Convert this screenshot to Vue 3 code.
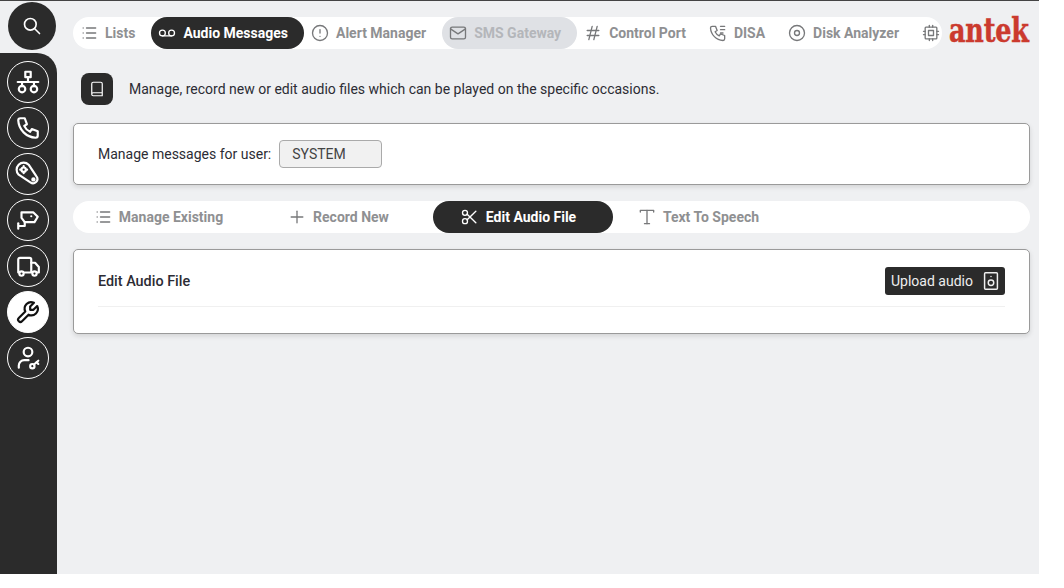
<template>
  <div class="page">
    <aside class="side">
      <button class="search-btn"><Icon :paths="icons.search" :size="20" /></button>
      <nav class="side-nav">
        <a v-for="item in sideItems" :key="item.id" class="side-item" :class="{ active: item.id === 'tools' }">
          <svg :class="{ flip: item.flip }" width="26" height="26" viewBox="0 0 24 24" fill="none" stroke="currentColor" stroke-width="2" stroke-linecap="round" stroke-linejoin="round">
            <path v-for="d in item.paths" :key="d" :d="d" />
          </svg>
        </a>
      </nav>
    </aside>

    <main class="main">
      <header class="top">
        <div class="tabs">
          <a v-for="t in topTabs" :key="t.label" class="tab" :class="{ active: t.active, disabled: t.disabled }">
            <Icon :paths="t.icon" :size="20" />
            <span v-if="t.label">{{ t.label }}</span>
          </a>
        </div>
        <div class="logo">antek</div>
      </header>

      <div class="intro">
        <span class="intro-icon"><Icon :paths="icons.book" :size="18" /></span>
        <p>Manage, record new or edit audio files which can be played on the specific occasions.</p>
      </div>

      <section class="card user-card">
        <label>Manage messages for user:</label>
        <div class="fake-input">SYSTEM</div>
      </section>

      <div class="subtabs">
        <a v-for="t in subTabs" :key="t.label" class="subtab" :class="{ active: t.active }">
          <Icon :paths="t.icon" :size="20" />
          <span>{{ t.label }}</span>
        </a>
      </div>

      <section class="card edit-card">
        <div class="edit-head">
          <h4>Edit Audio File</h4>
          <button class="upload">Upload audio <Icon :paths="icons.speaker" :size="22" /></button>
        </div>
      </section>
    </main>
  </div>
</template>

<script setup>
import { h } from 'vue'

const Icon = (props) => h('svg', {
  width: props.size, height: props.size, viewBox: '0 0 24 24', fill: 'none',
  stroke: 'currentColor', 'stroke-width': 2, 'stroke-linecap': 'round', 'stroke-linejoin': 'round',
}, props.paths.map(d => h('path', { d })))
Icon.props = ['paths', 'size']

const ring = 'M3 12a9 9 0 1 0 18 0a9 9 0 1 0 -18 0'

const icons = {
  search: ['M3 10a7 7 0 1 0 14 0a7 7 0 1 0 -14 0', 'M21 21l-6 -6'],
  list: ['M9 6h11', 'M9 12h11', 'M9 18h11', 'M5 6v.01', 'M5 12v.01', 'M5 18v.01'],
  voicemail: ['M3 12a3.5 3.5 0 1 0 7 0a3.5 3.5 0 1 0 -7 0', 'M14 12a3.5 3.5 0 1 0 7 0a3.5 3.5 0 1 0 -7 0', 'M6.5 15.5h11'],
  alert: [ring, 'M12 8v4', 'M12 16h.01'],
  mail: ['M3 7a2 2 0 0 1 2 -2h14a2 2 0 0 1 2 2v10a2 2 0 0 1 -2 2h-14a2 2 0 0 1 -2 -2z', 'M3 7l9 6l9 -6'],
  hash: ['M5 9h14', 'M5 15h14', 'M11 4l-4 16', 'M17 4l-4 16'],
  phoneLines: ['M5 4h4l2 5l-2.5 1.5a11 11 0 0 0 5 5l1.5 -2.5l5 2v4a2 2 0 0 1 -2 2a16 16 0 0 1 -15 -15a2 2 0 0 1 2 -2', 'M15 4h5', 'M15 8h5', 'M15 12h3'],
  disc: [ring, 'M9 12a3 3 0 1 0 6 0a3 3 0 1 0 -6 0'],
  cpu: ['M5 6a1 1 0 0 1 1 -1h12a1 1 0 0 1 1 1v12a1 1 0 0 1 -1 1h-12a1 1 0 0 1 -1 -1z', 'M9 9h6v6h-6z', 'M3 10h2', 'M3 14h2', 'M10 3v2', 'M14 3v2', 'M21 10h-2', 'M21 14h-2', 'M14 21v-2', 'M10 21v-2'],
  book: ['M5 19v-14a2 2 0 0 1 2 -2h10a2 2 0 0 1 2 2v16h-12a2 2 0 0 1 -2 -2a2 2 0 0 1 2 -2h12'],
  plus: ['M12 5v14', 'M5 12h14'],
  scissors: ['M3 7a3 3 0 1 0 6 0a3 3 0 1 0 -6 0', 'M3 17a3 3 0 1 0 6 0a3 3 0 1 0 -6 0', 'M8.6 8.6l10.4 10.4', 'M8.6 15.4l10.4 -10.4'],
  text: ['M4 6v-2h16v2', 'M12 4v16', 'M9 20h6'],
  speaker: ['M6 3h12a1 1 0 0 1 1 1v16a1 1 0 0 1 -1 1h-12a1 1 0 0 1 -1 -1v-16a1 1 0 0 1 1 -1z', 'M9 14a3 3 0 1 0 6 0a3 3 0 1 0 -6 0', 'M12 7v.01'],
}

const sideItems = [
  { id: 'network', paths: ['M9.5 2.5h5v5h-5z', 'M2.5 12h19', 'M12 7.5v4.5', 'M6.5 12v4', 'M17.5 12v4', 'M3.5 18.5a3 3 0 1 0 6 0a3 3 0 1 0 -6 0', 'M14.5 18.5a3 3 0 1 0 6 0a3 3 0 1 0 -6 0'] },
  { id: 'phone', paths: ['M5 3h4l2 5.5l-2.5 1.5a11 11 0 0 0 5.5 5.5l1.5 -2.5l5.5 2v4a2 2 0 0 1 -2 2a17 17 0 0 1 -16 -16a2 2 0 0 1 2 -2'] },
  { id: 'belt', paths: ['M3.4 12.6A6.5 6.5 0 0 1 12.6 3.4L19.8 14.2A4 4 0 0 1 14.2 19.8Z', 'M6 8a2 2 0 1 0 4 0a2 2 0 1 0 -4 0', 'M8 4.8v.6', 'M8 10.6v.6', 'M4.8 8h.6', 'M10.6 8h.6', 'M16 17a1 1 0 1 0 2 0a1 1 0 1 0 -2 0'] },
  { id: 'cctv', paths: ['M6 5h11l4 4l-3 5h-9l-3 -4z', 'M15 8.5h.01', 'M9 14v3.5h-5.5', 'M3 15v5'] },
  { id: 'truck', paths: ['M4 18h-1v-12a1.5 1.5 0 0 1 1.5 -1.5h9a1.5 1.5 0 0 1 1.5 1.5v12h-6', 'M15 9h3.5l3.5 4v5h-1.5', 'M4 19a2 2 0 1 0 4 0a2 2 0 1 0 -4 0', 'M16 19a2 2 0 1 0 4 0a2 2 0 1 0 -4 0'] },
  { id: 'tools', flip: true, paths: ['M7 10h3v-3l-3.5 -3.5a6 6 0 0 1 8 8l6 6a2 2 0 0 1 -3 3l-6 -6a6 6 0 0 1 -8 -8l3.5 3.5'] },
  { id: 'user', paths: ['M8 6.5a4 4 0 1 0 8 0a4 4 0 1 0 -8 0', 'M3.5 21v-2a5 5 0 0 1 5 -5h4', 'M14 19.5a2 2 0 1 0 4 0a2 2 0 1 0 -4 0', 'M17.5 18l4 -3.5', 'M20 16l1.5 1.5'] },
]

const topTabs = [
  { label: 'Lists', icon: icons.list },
  { label: 'Audio Messages', icon: icons.voicemail, active: true },
  { label: 'Alert Manager', icon: icons.alert },
  { label: 'SMS Gateway', icon: icons.mail, disabled: true },
  { label: 'Control Port', icon: icons.hash },
  { label: 'DISA', icon: icons.phoneLines },
  { label: 'Disk Analyzer', icon: icons.disc },
  { label: '', icon: icons.cpu },
]

const subTabs = [
  { label: 'Manage Existing', icon: icons.list },
  { label: 'Record New', icon: icons.plus },
  { label: 'Edit Audio File', icon: icons.scissors, active: true },
  { label: 'Text To Speech', icon: icons.text },
]
</script>

<style>
html, body { background: #fff; }
</style>

<style scoped>
.page {
  display: flex;
  width: 1039px;
  height: 574px;
  box-sizing: border-box;
  overflow: hidden;
  background: #eff0f2;
  border-top: 1px solid #444;
  font-family: Roboto, "Liberation Sans", sans-serif;
  font-size: 14px;
  color: #2c2c34;
}

/* 左侧导航 */
.side { width: 57px; flex: none; display: flex; flex-direction: column; }
.search-btn {
  width: 48px;
  height: 48px;
  margin: 1px 0 3px 8px;
  padding: 0;
  border: 0;
  border-radius: 50%;
  background: #2b2b2b;
  color: #fff;
  display: flex;
  align-items: center;
  justify-content: center;
}
.side-nav {
  flex: 1;
  background: #2b2b2b;
  border-top-right-radius: 20px;
  padding-top: 8px;
  display: flex;
  flex-direction: column;
  gap: 4px;
}
.side-item {
  width: 42px;
  height: 42px;
  margin-left: 7px;
  box-sizing: border-box;
  border: 1px solid #fff;
  border-radius: 50%;
  color: #fff;
  display: flex;
  align-items: center;
  justify-content: center;
}
.side-item.active { background: #fff; color: #111; }
.flip { transform: scaleX(-1); }

/* 主区域 */
.main { flex: 1; min-width: 0; padding: 16px 9px 0 16px; }
.top { display: flex; align-items: flex-start; height: 32px; }
.tabs {
  width: 869px;
  height: 32px;
  flex: none;
  display: flex;
  background: #fff;
  border-radius: 16px;
  overflow: hidden;
}
.tab {
  height: 32px;
  flex: none;
  display: flex;
  align-items: center;
  gap: 8px;
  padding: 0 16px 0 8px;
  box-sizing: border-box;
  border-radius: 16px;
  font-weight: 700;
  color: #8f9092;
  white-space: nowrap;
}
.tab svg, .subtab svg { color: #77787a; flex: none; stroke-width: 1.6; margin: 0 -2px; }
.tab.active { background: #2b2b2b; color: #fff; }
.tab.active svg { color: #fff; }
.tab.disabled { background: #dfe1e5; color: #b4b6ba; }
.logo {
  margin-left: 7px;
  margin-top: 2px;
  font-family: "DejaVu Serif", serif;
  font-weight: 700;
  font-size: 25.5px;
  line-height: 34px;
  letter-spacing: -0.2px;
  color: #cb3a2e;
  -webkit-text-stroke: 0.4px #cb3a2e;
  transform: scaleY(1.33);
  transform-origin: 0 100%;
}

.intro { display: flex; align-items: center; gap: 16px; margin: 24px 0 18px 8px; }
.intro-icon {
  width: 32px;
  height: 32px;
  border-radius: 8px;
  background: #2b2b2b;
  color: #fff;
  display: flex;
  align-items: center;
  justify-content: center;
}
.intro-icon svg { stroke-width: 1.6; }
.intro p { margin: 0; }

.card {
  background: #fff;
  border: 1px solid #9a9a9a;
  border-radius: 5px;
  box-shadow: 0 2px 5px rgba(0, 0, 0, 0.12);
  box-sizing: border-box;
}
.user-card { height: 62px; display: flex; align-items: center; padding-left: 24px; }
.fake-input {
  width: 103px;
  height: 28px;
  margin-left: 8px;
  padding-left: 12px;
  box-sizing: border-box;
  line-height: 26px;
  background: #f1f1f1;
  border: 1px solid #aaa;
  border-radius: 4px;
  color: #444;
}

.subtabs {
  height: 32px;
  margin: 16px 0;
  display: flex;
  background: #fff;
  border-radius: 16px;
}
.subtab {
  width: 180px;
  padding-right: 8px;
  box-sizing: border-box;
  display: flex;
  align-items: center;
  justify-content: center;
  gap: 8px;
  border-radius: 16px;
  font-weight: 700;
  color: #8f9092;
}
.subtab.active { background: #2b2b2b; color: #fff; }
.subtab.active svg { color: #fff; }

.edit-card { height: 85px; padding: 17px 24px 0; }
.edit-head {
  height: 39px;
  display: flex;
  align-items: flex-start;
  justify-content: space-between;
  border-bottom: 1px solid #f0f0f0;
}
.edit-head h4 { margin: 0; font-size: 14.4px; font-weight: 500; line-height: 29px; }
.upload {
  height: 28px;
  width: 120px;
  padding: 0 3px 0 6px;
  border: 0;
  border-radius: 3px;
  background: #2b2b2b;
  color: #eee;
  font: 400 14px Roboto, "Liberation Sans", sans-serif;
  display: flex;
  align-items: center;
  justify-content: space-between;
}
.upload svg { stroke-width: 1.6; }
</style>
